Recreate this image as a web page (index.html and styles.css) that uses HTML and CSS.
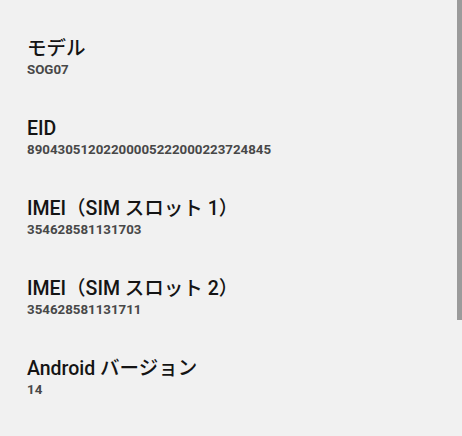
FILE: index.html
```html
<!DOCTYPE html>
<html lang="ja">
<head>
    <meta charset="UTF-8">
    <meta name="viewport" content="width=device-width, initial-scale=1.0">
    <title>デバイス情報</title>
    <link rel="stylesheet" href="styles.css">
</head>
<body>
    <div class="info-list">
        <div class="info-item">
            <div class="info-title">モデル</div>
            <div class="info-value">SOG07</div>
        </div>
        <div class="info-item">
            <div class="info-title">EID</div>
            <div class="info-value">89043051202200005222000223724845</div>
        </div>
        <div class="info-item">
            <div class="info-title">IMEI（SIM スロット 1）</div>
            <div class="info-value">354628581131703</div>
        </div>
        <div class="info-item">
            <div class="info-title">IMEI（SIM スロット 2）</div>
            <div class="info-value">354628581131711</div>
        </div>
        <div class="info-item">
            <div class="info-title">Android バージョン</div>
            <div class="info-value">14</div>
        </div>
    </div>
    <div class="scrollbar"></div>
</body>
</html>
```

FILE: styles.css
```css
body {
    font-family: Roboto, "Noto Sans CJK JP", sans-serif;
    margin: 0;
    padding: 0;
    background-color: #f1f1f1;
    color: #1c1c1c;
    overflow: hidden;
}
.info-list {
    padding-left: 27px;
}
.info-item {
    padding: 36px 0 1px 0;
}
.info-title {
    font-size: 19.5px;
    line-height: 25px;
    font-weight: 500;
    color: #141414;
}
.info-value {
    font-size: 13.3px;
    line-height: 18px;
    font-weight: 700;
    color: #484848;
}
.scrollbar {
    position: absolute;
    top: 0;
    right: 0;
    width: 5px;
    height: 320px;
    background-color: #9b9b9b;
}
```
